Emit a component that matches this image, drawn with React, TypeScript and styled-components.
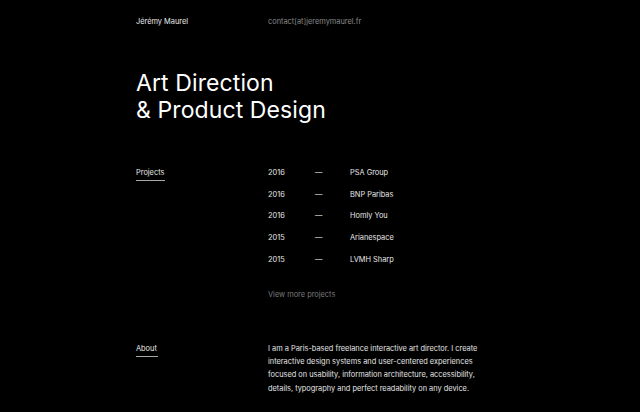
import React from "react";
import styled, { createGlobalStyle } from "styled-components";

const Global = createGlobalStyle`
  html, body { margin: 0; padding: 0; background: #000; }
  body { font-family: Inter, "Liberation Sans", Arial, sans-serif; color: #fff; -webkit-font-smoothing: antialiased; }
  #root { height: 412px; overflow: hidden; }
`;

const Page = styled.div`
  width: 368px;
  margin: 0 auto;
  padding-top: 17px;
`;

const Grid = styled.div`
  display: grid;
  grid-template-columns: 132px 1fr;
`;

const Header = styled(Grid)`
  font-size: 7.4px;
  line-height: 10px;
`;

const Name = styled.div`
  color: #e8e8e8;
`;

const Mail = styled.a`
  color: #8a8a8a;
  text-decoration: none;
`;

const Title = styled.h1`
  margin: 43px 0 0 0;
  font-size: 23px;
  font-weight: 400;
  line-height: 27px;
  letter-spacing: 0.1px;
  color: #fff;
`;

const Section = styled(Grid)<{ $top: number }>`
  margin-top: ${(p) => p.$top}px;
  font-size: 7.4px;
  line-height: 10px;
`;

const Label = styled.div`
  justify-self: start;
  color: #e8e8e8;
  padding: 0 1px 2px 0;
  border-bottom: 1px solid #a8a8a8;
  align-self: start;
`;

const List = styled.div`
  display: flex;
  flex-direction: column;
  gap: 11.7px;
`;

const Row = styled.div`
  display: grid;
  grid-template-columns: 47px 35px 1fr;
  color: #e8e8e8;
`;

const More = styled.div`
  margin-top: 25px;
  color: #7a7a7a;
`;

const Text = styled.div`
  max-width: 216px;
  color: #e6e6e6;
  line-height: 13.3px;
  margin-top: -2px;
  p { margin: 0 0 16px 0; }
`;

const projects = [
  ["2016", "PSA Group"],
  ["2016", "BNP Paribas"],
  ["2016", "Homly You"],
  ["2015", "Arianespace"],
  ["2015", "LVMH Sharp"],
];

export default function App() {
  return (
    <>
      <Global />
      <Page>
        <Header>
          <Name>Jérémy Maurel</Name>
          <Mail href="#">contact[at]jeremymaurel.fr</Mail>
        </Header>
        <Title>
          Art Direction
          <br />& Product Design
        </Title>
        <Section $top={44}>
          <Label>Projects</Label>
          <div>
            <List>
              {projects.map(([y, n]) => (
                <Row key={n}>
                  <span>{y}</span>
                  <span>—</span>
                  <span>{n}</span>
                </Row>
              ))}
            </List>
            <More>View more projects</More>
          </div>
        </Section>
        <Section $top={44}>
          <Label>About</Label>
          <Text>
            <p>
              I am a Paris-based freelance interactive art director. I create
              interactive design systems and user-centered experiences focused
              on usability, information architecture, accessibility, details,
              typography and perfect readability on any device.
            </p>
            <p>
              Since 2014 I have been working with agencies and start-ups to
              build digital products.
            </p>
          </Text>
        </Section>
      </Page>
    </>
  );
}
